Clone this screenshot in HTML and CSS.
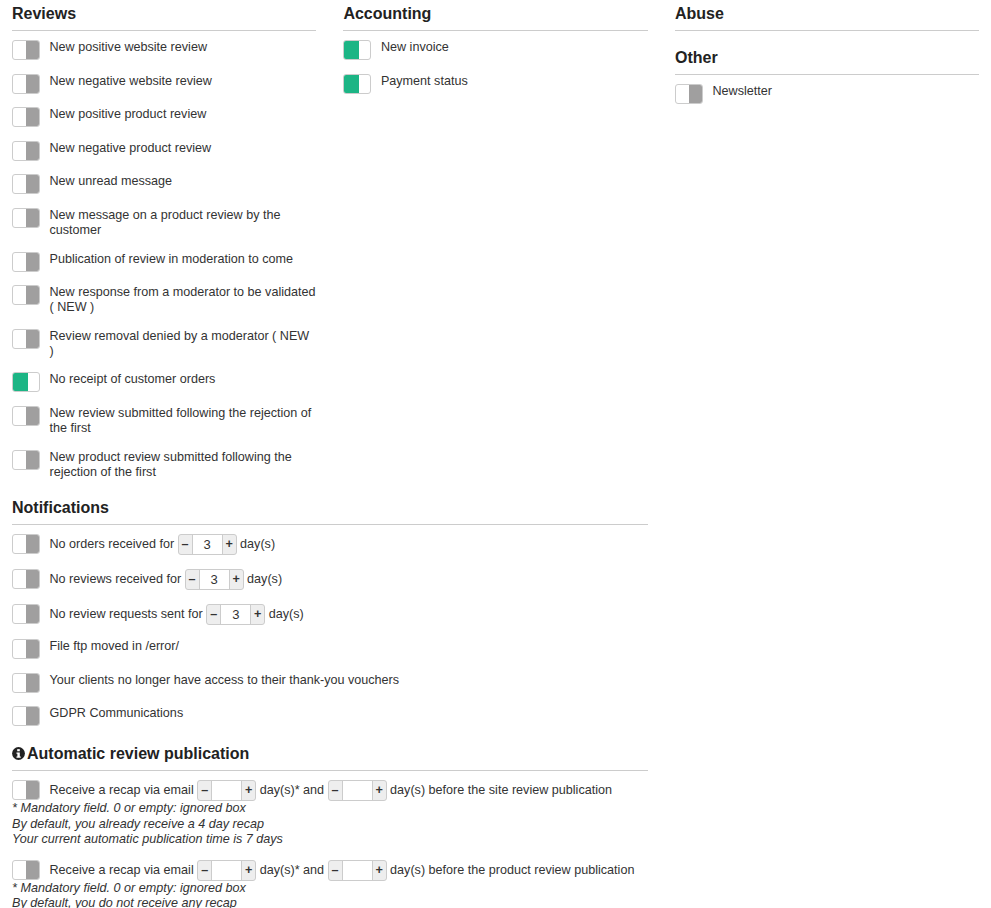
FILE: index.html
```html
<!DOCTYPE html>
<html lang="en">
<head>
    <meta charset="UTF-8">
    <meta name="viewport" content="width=device-width, initial-scale=1.0">
    <title>Email alerts</title>
    <link rel="stylesheet" href="styles.css">
</head>
<body>
    <div class="columns">
        <section class="group">
            <h3>Reviews</h3>
            <div class="row"><span class="toggle"></span><span class="label">New positive website review</span></div>
            <div class="row"><span class="toggle"></span><span class="label">New negative website review</span></div>
            <div class="row"><span class="toggle"></span><span class="label">New positive product review</span></div>
            <div class="row"><span class="toggle"></span><span class="label">New negative product review</span></div>
            <div class="row"><span class="toggle"></span><span class="label">New unread message</span></div>
            <div class="row"><span class="toggle"></span><span class="label">New message on a product review by the customer</span></div>
            <div class="row"><span class="toggle"></span><span class="label">Publication of review in moderation to come</span></div>
            <div class="row"><span class="toggle"></span><span class="label">New response from a moderator to be validated ( NEW )</span></div>
            <div class="row"><span class="toggle"></span><span class="label">Review removal denied by a moderator ( NEW )</span></div>
            <div class="row"><span class="toggle on"></span><span class="label">No receipt of customer orders</span></div>
            <div class="row"><span class="toggle"></span><span class="label">New review submitted following the rejection of the first</span></div>
            <div class="row"><span class="toggle"></span><span class="label">New product review submitted following the rejection of the first</span></div>
        </section>
        <section class="group">
            <h3>Accounting</h3>
            <div class="row"><span class="toggle on"></span><span class="label">New invoice</span></div>
            <div class="row"><span class="toggle on"></span><span class="label">Payment status</span></div>
        </section>
        <section class="group">
            <h3>Abuse</h3>
            <h3>Other</h3>
            <div class="row"><span class="toggle"></span><span class="label">Newsletter</span></div>
        </section>
        <section class="group wide">
            <h3 class="notif-title">Notifications</h3>
            <div class="row spin-row"><span class="toggle"></span><span class="label">No orders received for <span class="spinner"><b>–</b><i>3</i><b>+</b></span> day(s)</span></div>
            <div class="row spin-row"><span class="toggle"></span><span class="label">No reviews received for <span class="spinner"><b>–</b><i>3</i><b>+</b></span> day(s)</span></div>
            <div class="row spin-row"><span class="toggle"></span><span class="label">No review requests sent for <span class="spinner"><b>–</b><i>3</i><b>+</b></span> day(s)</span></div>
            <div class="row"><span class="toggle"></span><span class="label">File ftp moved in /error/</span></div>
            <div class="row"><span class="toggle"></span><span class="label">Your clients no longer have access to their thank-you vouchers</span></div>
            <div class="row"><span class="toggle"></span><span class="label">GDPR Communications</span></div>
            <h3 class="auto-title">
                <svg class="info" viewBox="0 0 14 14" width="13" height="13"><circle cx="7" cy="7" r="6.9" fill="#222"/><rect x="5.6" y="2.3" width="2.8" height="2.3" fill="#fff"/><path d="M4.8 5.8h3.6v4.4h1v1.5H4.8v-1.5h1V7.3h-1z" fill="#fff"/></svg>Automatic review publication
            </h3>
            <div class="recap">
                <div class="recap-line"><span class="toggle"></span><span class="label">Receive a recap via email <span class="spinner"><b>–</b><i></i><b>+</b></span> day(s)* and <span class="spinner"><b>–</b><i></i><b>+</b></span> day(s) before the site review publication</span></div>
                <p class="note">* Mandatory field. 0 or empty: ignored box<br>By default, you already receive a 4 day recap<br>Your current automatic publication time is 7 days</p>
            </div>
            <div class="recap">
                <div class="recap-line"><span class="toggle"></span><span class="label">Receive a recap via email <span class="spinner"><b>–</b><i></i><b>+</b></span> day(s)* and <span class="spinner"><b>–</b><i></i><b>+</b></span> day(s) before the product review publication</span></div>
                <p class="note">* Mandatory field. 0 or empty: ignored box<br>By default, you do not receive any recap</p>
            </div>
        </section>
    </div>
</body>
</html>
```
FILE: styles.css
```css
body {
    margin: 0;
    font-family: "Liberation Sans", Arial, sans-serif;
    font-size: 12.6px;
    line-height: 15px;
    color: #333;
    background: #fff;
}
.columns {
    display: grid;
    grid-template-columns: 304px 304.2px 304px;
    column-gap: 27.4px;
    align-items: start;
    padding: 0 12px;
}
.wide {
    grid-column: 1 / span 2;
}
h3 {
    margin: 5px 0 9px;
    padding-bottom: 7px;
    border-bottom: 1px solid #ccc;
    font-size: 16px;
    line-height: 18px;
    font-weight: bold;
    color: #222;
}
.group h3 + h3 {
    margin-top: 18px;
}
.notif-title {
    margin-top: 6px;
}
.row {
    display: flex;
    gap: 9.5px;
    margin-bottom: 13.6px;
}
.spin-row {
    margin-bottom: 14px;
}
.toggle {
    flex: none;
    box-sizing: border-box;
    display: block;
    position: relative;
    width: 28px;
    height: 20px;
    border: 1px solid #ccc;
    border-radius: 3px;
    background: #fff;
}
.toggle::after {
    content: "";
    position: absolute;
    top: 0;
    bottom: 0;
    right: 0;
    width: 13px;
    background: #a09f9f;
    border-radius: 0 2px 2px 0;
}
.toggle.on::after {
    left: 0;
    right: auto;
    width: 15px;
    background: #1cb585;
    border-radius: 2px 0 0 2px;
}
.label {
    flex: 1;
}
.spinner {
    display: inline-flex;
    box-sizing: border-box;
    height: 21px;
    vertical-align: middle;
    border: 1px solid #ccc;
    border-radius: 3px;
    background: #eee;
    color: #333;
}
.spinner b {
    width: 13px;
    text-align: center;
    line-height: 19px;
}
.spinner i {
    width: 29px;
    background: #fff;
    border: solid #ccc;
    border-width: 0 1px;
    font-style: normal;
    text-align: center;
    line-height: 19px;
    font-size: 13px;
}
.auto-title {
    margin-top: 19px;
}
.info {
    vertical-align: -1px;
    margin-right: 2px;
}
.recap {
    margin-bottom: 12px;
}
.recap-line {
    display: flex;
    gap: 9.5px;
}
.note {
    margin: 0;
    font-style: italic;
    line-height: 15.5px;
}
```
